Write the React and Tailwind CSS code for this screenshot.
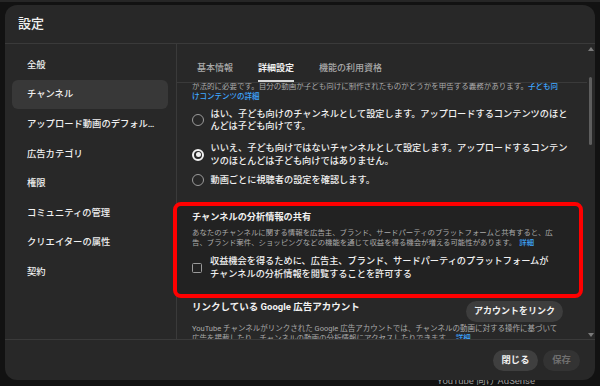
import React from 'react';

const navItems = [
  '全般',
  'チャンネル',
  'アップロード動画のデフォル…',
  '広告カテゴリ',
  '権限',
  'コミュニティの管理',
  'クリエイターの属性',
  '契約',
];

const Radio = ({ checked }) => (
  <span
    className={
      checked
        ? 'flex h-[12px] w-[12px] shrink-0 items-center justify-center rounded-full border-[2px] border-[#f1f1f1]'
        : 'h-[12px] w-[12px] shrink-0 rounded-full border-[1.3px] border-[#9a9a9a]'
    }
  >
    {checked && <span className="h-[5px] w-[5px] rounded-full bg-[#f1f1f1]" />}
  </span>
);

const Scrollbar = () => (
  <div className="flex w-[8px] flex-col items-center">
    <svg width="6" height="4" viewBox="0 0 6 4" className="mt-[3px]">
      <path d="M3 0L6 4H0z" fill="#7a7a7a" />
    </svg>
    <div className="mt-[26px] ml-[-1px] h-[68px] w-[3px] rounded-sm bg-[#5e5e5e]" />
    <div className="flex-1" />
    <svg width="6" height="4" viewBox="0 0 6 4" className="mb-[2px]">
      <path d="M0 0H6L3 4z" fill="#7a7a7a" />
    </svg>
  </div>
);

const App = () => {
  return (
    <div className="h-[386px] w-[600px] overflow-hidden bg-[#121212] font-[Roboto,'Noto_Sans_CJK_JP',sans-serif] text-[#f1f1f1]">
      <div className="h-[5px] w-full border-t-[2px] border-[#262626]" />
      <div className="px-[5px]">
        <div className="relative z-10 flex h-[375px] flex-col overflow-hidden rounded-[12px] bg-[#282828]">
          {/* header */}
          <div className="flex h-[39px] shrink-0 items-center border-b border-[#3a3a3a] px-[13px]">
            <span className="text-[13px] font-medium leading-[16px]">設定</span>
          </div>

          {/* body */}
          <div className="flex h-[295px] shrink-0">
            <div className="w-[172px] shrink-0 border-r border-[#3a3a3a] pt-[6px] pl-[7px] pr-[8px]">
              {navItems.map((item) => (
                <div
                  key={item}
                  className={
                    'flex h-[29.6px] items-center rounded-[6px] pl-[15px] text-[9.3px] font-medium leading-[12px] whitespace-nowrap ' +
                    (item === 'チャンネル' ? 'bg-[#383838]' : '')
                  }
                >
                  {item}
                </div>
              ))}
            </div>

            <div className="flex min-w-0 flex-1">
              <div className="flex min-w-0 flex-1 flex-col">
                {/* tabs */}
                <div className="flex h-[39px] shrink-0 gap-[25px] border-b border-[#3a3a3a] pl-[20px]">
                  <div className="flex h-full flex-col justify-end border-b-[2px] border-transparent pb-[6px] text-[9px] font-medium leading-[12px] text-[#aaaaaa]">
                    基本情報
                  </div>
                  <div className="flex h-full flex-col justify-end border-b-[2px] border-[#d9d9d9] pb-[6px] text-[9px] font-bold leading-[12px] text-[#f1f1f1]">
                    詳細設定
                  </div>
                  <div className="flex h-full flex-col justify-end border-b-[2px] border-transparent pb-[6px] text-[9px] font-medium leading-[12px] text-[#aaaaaa]">
                    機能の利用資格
                  </div>
                </div>

                {/* content */}
                <div className="h-[256px] overflow-x-visible overflow-y-clip pl-[15px] pr-[24px]">
                  <div className="mt-[-1.3px] whitespace-nowrap text-[7.5px] leading-[10px] text-[#aaaaaa]">
                    <div>
                      が法的に必要です。自分の動画が子ども向けに制作されたものかどうかを申告する義務があります。
                      <span className="font-medium text-[#3ea6ff]">子ども向</span>
                    </div>
                    <div className="font-medium text-[#3ea6ff]">けコンテンツの詳細</div>
                  </div>

                  <div className="mt-[6px] flex flex-col text-[9.2px] font-medium leading-[12.7px] whitespace-nowrap">
                    <div className="flex items-center gap-[6.5px]">
                      <Radio />
                      <div>
                        <div>はい、子ども向けのチャンネルとして設定します。アップロードするコンテンツのほと</div>
                        <div>んどは子ども向けです。</div>
                      </div>
                    </div>
                    <div className="mt-[9px] flex items-center gap-[6.5px]">
                      <Radio checked />
                      <div>
                        <div>いいえ、子ども向けではないチャンネルとして設定します。アップロードするコンテン</div>
                        <div>ツのほとんどは子ども向けではありません。</div>
                      </div>
                    </div>
                    <div className="mt-[6px] flex items-center gap-[6.5px]">
                      <Radio />
                      <div>動画ごとに視聴者の設定を確認します。</div>
                    </div>
                  </div>

                  {/* analytics sharing */}
                  <div className="mt-[15.4px] -ml-[19px] -mr-[20px] rounded-[8px] border-[4px] border-[#ff0000] bg-[#222222] pt-[5px] pb-[13.8px] pl-[15px] whitespace-nowrap">
                    <div className="text-[9.2px] font-bold leading-[12px]">チャンネルの分析情報の共有</div>
                    <div className="mt-[5.6px] text-[7.4px] leading-[10px] text-[#aaaaaa]">
                      <div>あなたのチャンネルに関する情報を広告主、ブランド、サードパーティのプラットフォームと共有すると、広</div>
                      <div>
                        告、ブランド案件、ショッピングなどの機能を通じて収益を得る機会が増える可能性があります。
                        <span className="ml-[3px] font-medium text-[#3ea6ff]">詳細</span>
                      </div>
                    </div>
                    <div className="mt-[7.2px] flex items-center gap-[8px]">
                      <span className="h-[10px] w-[10px] shrink-0 rounded-[1.5px] border-[1.3px] border-[#9a9a9a]" />
                      <div className="text-[9.2px] font-medium leading-[12.3px]">
                        <div>収益機会を得るために、広告主、ブランド、サードパーティのプラットフォームが</div>
                        <div>チャンネルの分析情報を閲覧することを許可する</div>
                      </div>
                    </div>
                  </div>

                  {/* linked ads account */}
                  <div className="mt-[3px] flex items-start justify-between">
                    <div className="text-[9.5px] font-bold leading-[12px]">リンクしている Google 広告アカウント</div>
                    <button className="flex h-[21px] w-[97px] items-center justify-center rounded-full bg-[#3d3d3d] text-[9px] font-bold leading-[12px] text-[#f1f1f1]">
                      アカウントをリンク
                    </button>
                  </div>
                  <div className="mt-[2.3px] whitespace-nowrap text-[7.5px] leading-[10px] text-[#aaaaaa]">
                    <div>YouTube チャンネルがリンクされた Google 広告アカウントでは、チャンネルの動画に対する操作に基づいて</div>
                    <div>
                      広告を掲載したり、チャンネルの動画の分析情報にアクセスしたりできます。
                      <span className="ml-[3px] font-medium text-[#3ea6ff]">詳細</span>
                    </div>
                  </div>
                </div>
              </div>
              <Scrollbar />
            </div>
          </div>

          {/* footer */}
          <div className="flex h-[41px] shrink-0 items-center justify-end gap-[5px] border-t border-[#3a3a3a] pr-[15px]">
            <button className="flex h-[21px] w-[45px] items-center justify-center rounded-full bg-[#3f3f3f] text-[9.3px] font-bold leading-[12px] text-[#f1f1f1]">
              閉じる
            </button>
            <button className="flex h-[21px] w-[37px] items-center justify-center rounded-full bg-[#333333] text-[9.3px] font-bold leading-[12px] text-[#6f6f6f]">
              保存
            </button>
          </div>
        </div>
        <div className="-mt-[5px] ml-[432px] text-[9.5px] leading-[12px] text-[#9a9a9a]">YouTube 向け AdSense</div>
      </div>
    </div>
  );
};

export default App;
